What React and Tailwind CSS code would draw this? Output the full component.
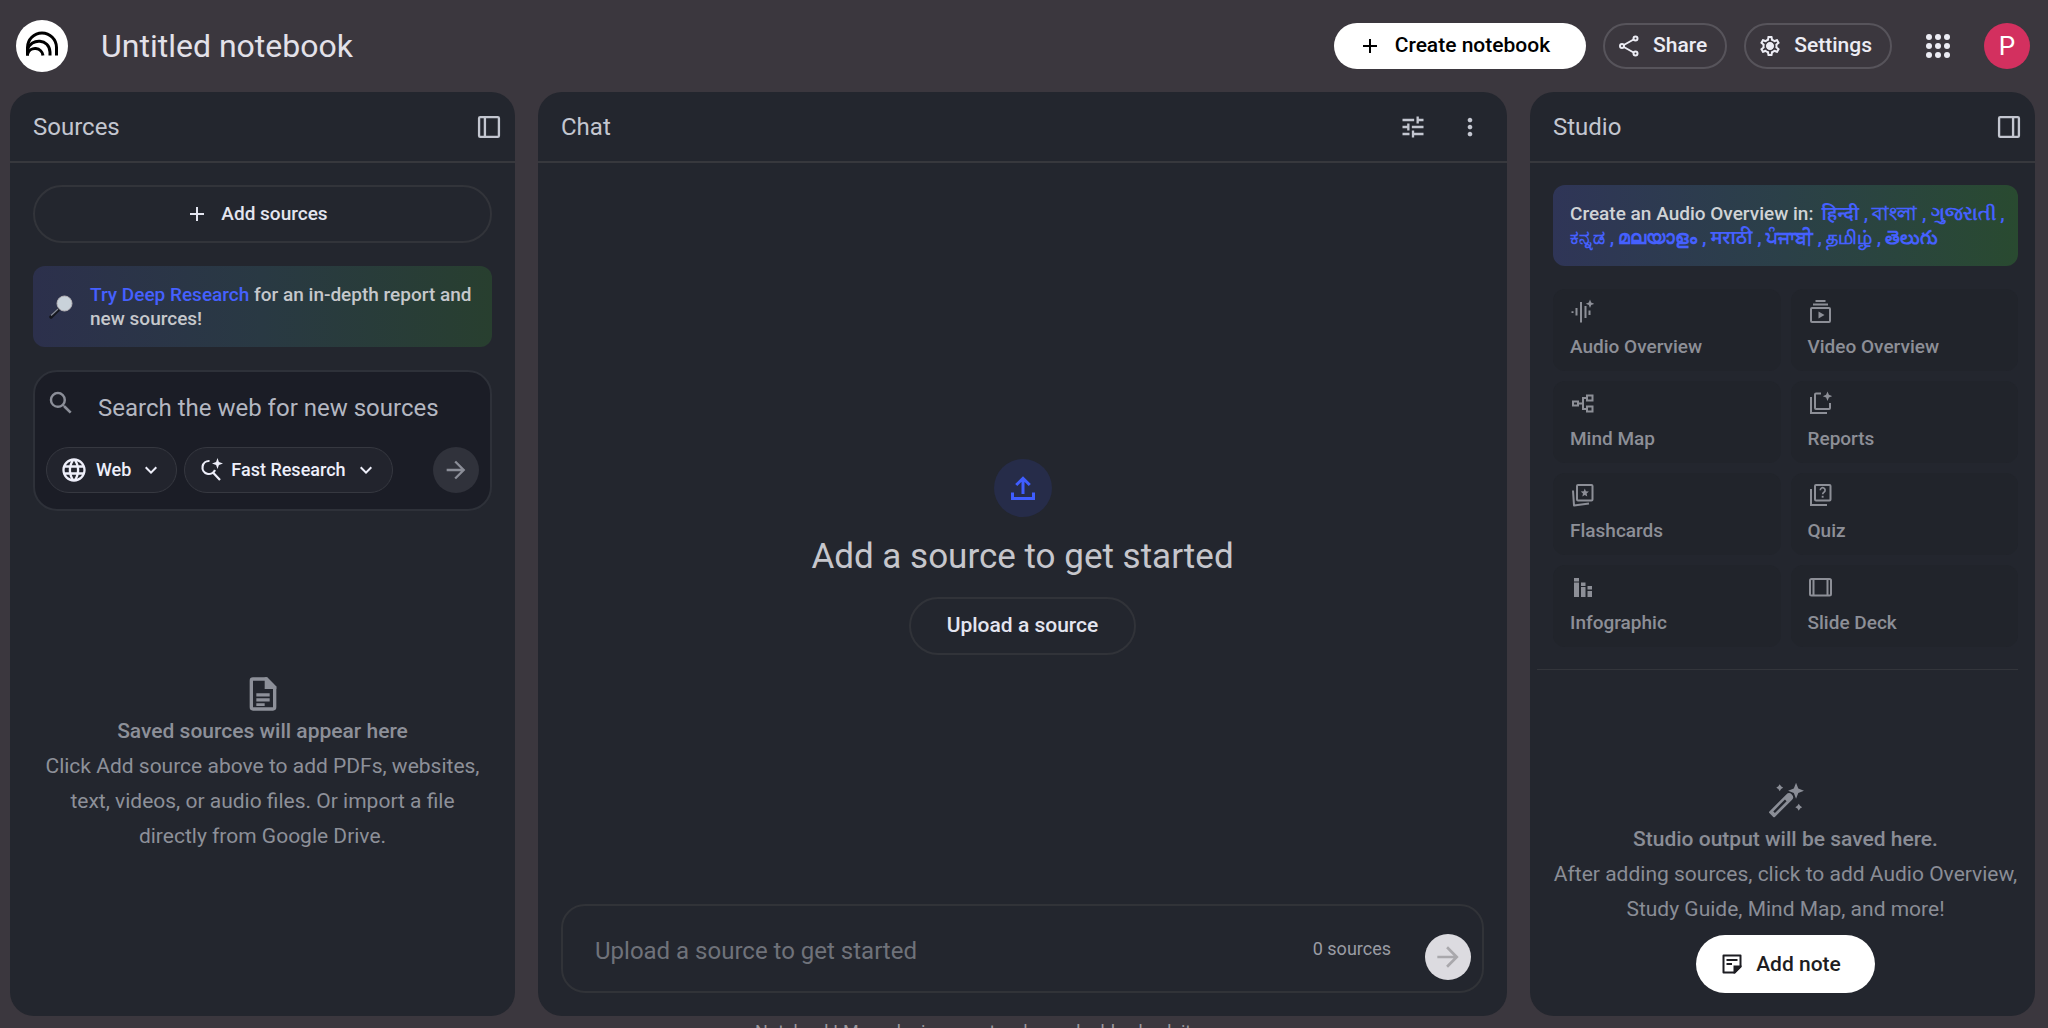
import React from "react";
import {
  MdAdd, MdOutlineSettings, MdTune, MdMoreVert, MdLanguage, MdExpandMore,
  MdArrowForward, MdSearch,
} from "react-icons/md";

const stroke = { fill: "none", stroke: "currentColor", strokeWidth: 2 };

function Icon({ children, className }) {
  return (
    <svg viewBox="0 0 24 24" fill="currentColor" aria-hidden="true" className={className}>
      {children}
    </svg>
  );
}

const Logo = () => (
  <svg viewBox="0 0 52 52" className="size-13 shrink-0" role="img" aria-label="Logo">
    <circle cx="26" cy="26" r="26" fill="#fff" />
    <g fill="none" stroke="#000" strokeWidth="3">
      <path d="M11.5 35.5V27.500a14.500 14.500 0 0 1 29 0V35.500" />
      <path d="M11.500 29.500C15 17.500 33.500 18.500 34 32V35.500" />
      <path d="M11.500 35.500v-1.500a8 8 0 0 1 15.500 1.500" />
    </g>
  </svg>
);

const PanelIcon = ({ right }) => (
  <Icon className="size-7">
    <rect x="3.500" y="3.500" width="17" height="17" rx="1" {...stroke} />
    <path d={right ? "M15.500 3v18" : "M8.500 3v18"} {...stroke} />
  </Icon>
);

const ShareIcon = () => (
  <Icon className="size-6">
    <g {...stroke}>
      <circle cx="18.500" cy="4.500" r="2" />
      <circle cx="5" cy="12" r="2" />
      <circle cx="18.500" cy="19.500" r="2" />
      <path d="M6.800 11l9.800-5.500M6.800 13l9.800 5.500" />
    </g>
  </Icon>
);

const SettingsIcon = () => (
  <Icon className="size-6">
    <MdOutlineSettings size={24} />
    <circle cx="12" cy="12" r="3.500" />
  </Icon>
);

const AppsIcon = () => (
  <Icon className="size-6">
    {[3, 12, 21].map((y) => [3, 12, 21].map((x) => <circle key={`${x}-${y}`} cx={x} cy={y} r="3" />))}
  </Icon>
);

const SearchSpark = () => (
  <Icon className="size-6">
    <path d="M10.500 3a6.500 6.500 0 1 0 5.500 9M13.500 14l7.500 8" {...stroke} strokeWidth="2.200" />
    <path d="M18.500 0l1.400 4L24 5.500l-4.100 1.400L18.500 11l-1.400-4.100L13 5.500 17.100 4z" />
  </Icon>
);

const DocIcon = () => (
  <Icon className="size-10">
    <path d="M14 3H6a1 1 0 0 0-1 1v16a1 1 0 0 0 1 1h12a1 1 0 0 0 1-1V8z" {...stroke} />
    <path d="M13 2h1.500L20 7.500V9h-7z" />
    <path d="M8 11.500h8v2H8zM8 14.500h8v2H8zM8 17.500h5v1.700H8z" />
  </Icon>
);

const UploadIcon = () => (
  <Icon className="size-9">
    <path d="M5 15v4h14v-4" {...stroke} />
    <path d="M12 16V6M7.500 10L12 5.500 16.500 10" {...stroke} />
  </Icon>
);

const NoteIcon = () => (
  <Icon className="size-6">
    <path d="M3.500 3.500h17v11l-6 6h-11z" {...stroke} strokeLinejoin="round" />
    <path d="M13.500 13.500h8v1.500L15 21.500h-1.500z" />
    <path d="M6.500 7h11v2h-11zM6.500 11h5.500v2H6.500z" />
  </Icon>
);

const WandIcon = () => (
  <Icon className="size-9">
    <path
      fillRule="evenodd"
      d="M.9 19.600L12.200 8.300a2.600 2.600 0 0 1 3.700 3.700L4.600 23.300a.8.8 0 0 1-1.100 0L.9 20.700a.8.8 0 0 1 0-1.100zM3.500 19.600l1.100 1.100 7.800-7.900-1.100-1.100z"
    />
    <path d="M18.700.5l1.500 3.800L24 5.800l-3.800 1.500-1.500 3.800-1.500-3.800-3.800-1.500 3.800-1.500z" />
    <path d="M7.800 1.500l.9 1.400 1.400.9-1.400.9-.9 1.400-.9-1.400-1.400-.9 1.400-.9zM20.500 14.500l.9 1.400 1.400.9-1.400.9-.9 1.400-.9-1.400-1.400-.9 1.400-.9z" />
  </Icon>
);

const AudioIcon = () => (
  <Icon className="size-6">
    <path d="M2.500 12.200v1.800M6.500 9v7.500M11 3v20.500M15.500 7v12M19.500 11.500v4.500" {...stroke} />
    <path d="M20 .5l1.200 3.100 3 1.200-3 1.200-1.200 3.100-1.200-3.100-3-1.200 3-1.200z" />
  </Icon>
);
const VideoIcon = () => (
  <Icon className="size-6">
    <rect x="3" y="9" width="19" height="14" rx="1" {...stroke} />
    <path d="M5 4.500h15v2H5zM7.500 1h10v2h-10z" />
    <path d="M10.500 12.500v7l6-3.500z" />
  </Icon>
);
const MindIcon = () => (
  <Icon className="size-6">
    <g {...stroke}>
      <rect x="3" y="10.500" width="5" height="4" />
      <rect x="17" y="4.500" width="5.500" height="5" />
      <rect x="17" y="15.500" width="5.500" height="5" />
      <path d="M8 12.500h5M17 7h-4v11h4" />
    </g>
  </Icon>
);
const ReportIcon = () => (
  <Icon className="size-6">
    <path d="M13 2.500H8a1 1 0 0 0-1 1V17a1 1 0 0 0 1 1h13a1 1 0 0 0 1-1v-5M3 6v16h16" {...stroke} />
    <path d="M19.500.5l1.400 3.300 3.300 1.400-3.300 1.400-1.400 3.300-1.400-3.300-3.300-1.400 3.300-1.400z" />
  </Icon>
);
const CardsIcon = () => (
  <Icon className="size-6">
    <rect x="7" y="2" width="15.500" height="15.500" rx="1" {...stroke} />
    <path d="M3 7.500l1 15 15-2" {...stroke} strokeLinejoin="round" />
    <path d="M14.800 5.500l1.100 2.800 3 .3-2.300 2 .7 3-2.500-1.600-2.500 1.600.7-3-2.300-2 3-.3z" />
  </Icon>
);
const QuizIcon = () => (
  <Icon className="size-6">
    <rect x="7" y="2" width="15.500" height="15.500" rx="1" {...stroke} />
    <path d="M3 6v16h16" {...stroke} />
    <path d="M12.300 7.200a2.400 2.400 0 1 1 3.900 1.800c-.9.700-1.500 1.100-1.500 2.300" {...stroke} strokeWidth="1.700" />
    <path d="M13.700 12.800h1.900v1.900h-1.900z" />
  </Icon>
);
const InfoIcon = () => (
  <Icon className="size-6">
    <path d="M4 3h5v3.500H4zM4 7.500h5V22H4zM11 7.500h4.500V11H11zM11 12h4.500v10H11zM17.500 11H22v3.500h-4.500zM17.500 16H22v6h-4.500z" />
  </Icon>
);
const SlideIcon = () => (
  <Icon className="size-6">
    <rect x="2" y="4" width="21" height="16.500" rx="1.500" {...stroke} />
    <path d="M5.500 4v16M19.500 4v16" {...stroke} />
  </Icon>
);

const Magnifier = () => (
  <svg viewBox="0 0 24 24" className="size-6 shrink-0" aria-hidden="true">
    <path d="M2 22L9 15" stroke="#15171e" strokeWidth="3.500" strokeLinecap="round" />
    <path d="M2 20.500L9 14" stroke="#868b99" strokeWidth="1.300" />
    <circle cx="15.500" cy="8.500" r="7.500" fill="#c9d2da" stroke="#b5b2b6" strokeWidth="1" />
  </svg>
);

const tools = [
  ["Audio Overview", AudioIcon], ["Video Overview", VideoIcon],
  ["Mind Map", MindIcon], ["Reports", ReportIcon],
  ["Flashcards", CardsIcon], ["Quiz", QuizIcon],
  ["Infographic", InfoIcon], ["Slide Deck", SlideIcon],
];

const languages = [
  ["hi", "हिन्दी"], ["bn", "বাংলা"], ["gu", "ગુજરાતી"], ["kn", "ಕನ್ನಡ"], ["ml", "മലയാളം"],
  ["mr", "मराठी"], ["pa", "ਪੰਜਾਬੀ"], ["ta", "தமிழ்"], ["te", "తెలుగు"],
];

function Panel({ title, actions, wide, children }) {
  return (
    <section className="flex min-h-0 min-w-0 flex-col overflow-hidden rounded-3xl bg-[#23262e]">
      <header className={`flex h-[71px] shrink-0 items-center justify-between border-b-2 border-[#37383d] pl-[23px] text-[#c3c6d0] ${wide ? "pr-[23px]" : "pr-3"}`}>
        <h2 className="text-2xl">{title}</h2>
        <div className="flex gap-[29px]">{actions}</div>
      </header>
      {children}
    </section>
  );
}

export default function App() {
  return (
    <div className="flex h-screen flex-col overflow-hidden bg-[#3b373e] font-[Roboto,'Noto_Sans',sans-serif]">
      <header className="flex h-[92px] shrink-0 items-center pr-[18px] pl-4">
        <Logo />
        <h1 className="ml-[33px] text-[32px] text-[#e3e1e9]">Untitled notebook</h1>
        <div className="ml-auto flex items-center text-[21px] font-medium text-[#ececf4]">
          <button className="flex h-[46px] items-center gap-[13px] rounded-full bg-white pr-9 pl-6 text-black">
            <MdAdd className="size-6" />Create notebook
          </button>
          <button className="ml-[17px] flex h-[46px] items-center gap-3 rounded-full border-2 border-[#57545b] pr-[18px] pl-3">
            <ShareIcon />Share
          </button>
          <button className="ml-[17px] flex h-[46px] items-center gap-3 rounded-full border-2 border-[#57545b] pr-[18px] pl-3">
            <SettingsIcon />Settings
          </button>
          <button aria-label="Apps" className="ml-[34px]"><AppsIcon /></button>
          <button aria-label="Account" className="ml-[34px] size-[46px] rounded-full bg-[#d3305f] text-[26px] font-normal text-white">P</button>
        </div>
      </header>

      <main className="grid min-h-0 flex-1 grid-cols-[505fr_969fr_505fr] gap-[23px] pr-[13px] pl-[10px]">
        <Panel title="Sources" actions={<button aria-label="Collapse sources"><PanelIcon /></button>}>
          <div className="flex min-h-0 flex-1 flex-col px-[23px] pt-[22px]">
            <button className="flex h-[58px] shrink-0 items-center justify-center gap-3 rounded-full border-2 border-[#32343a] pr-3 text-[19px] font-medium text-[#e3e5f0]">
              <MdAdd className="size-6" />Add sources
            </button>
            <div className="mt-[23px] flex h-[81px] shrink-0 items-center gap-[17px] rounded-xl bg-linear-to-r from-[#2c304c] via-[#293943] to-[#283f2f] pr-3 pl-4 text-[19px]/6 font-medium text-[#c6c8cc]">
              <Magnifier />
              <p><a href="#research" className="text-[#4560ff]">Try Deep Research</a> for an in-depth report and new sources!</p>
            </div>
            <form className="mt-[23px] flex h-[141px] shrink-0 flex-col justify-between rounded-3xl border-2 border-[#2e3139] bg-[#1b1d26] px-[11px] pt-4 pb-4">
              <div className="flex gap-[22px]">
                <MdSearch className="size-[30px] text-[#8b8e98]" />
                <input aria-label="Search the web" placeholder="Search the web for new sources" className="min-w-0 flex-1 pt-1 text-2xl/8 outline-none placeholder:text-[#b4b7c1]" />
              </div>
              <div className="flex items-center gap-[7px] text-lg font-medium text-[#eeeffa]">
                <button type="button" className="flex h-[46px] items-center gap-2 rounded-full border border-[#363840] bg-[#22242d] px-[13px]">
                  <MdLanguage className="size-7" />Web<MdExpandMore className="size-6" />
                </button>
                <button type="button" className="flex h-[46px] items-center gap-2 rounded-full border border-[#363840] bg-[#22242d] px-3.5">
                  <SearchSpark />Fast Research<MdExpandMore className="size-6" />
                </button>
                <button aria-label="Search" className="ml-auto flex size-[46px] items-center justify-center rounded-full bg-[#30323b] text-[#8b8e98]">
                  <MdArrowForward className="size-7" />
                </button>
              </div>
            </form>
            <div className="mt-[163px] flex flex-col items-center px-2 text-center text-[21px]/[35px] text-[#8d9099]">
              <DocIcon />
              <p className="font-medium">Saved sources will appear here</p>
              <p>Click Add source above to add PDFs, websites, text, videos, or audio files. Or import a file directly from Google Drive.</p>
            </div>
          </div>
        </Panel>

        <Panel
          title="Chat"
          wide
          actions={<><button aria-label="Configure chat"><MdTune className="size-7" /></button><button aria-label="More"><MdMoreVert className="size-7" /></button></>}
        >
          <div className="flex min-h-0 flex-1 flex-col items-center justify-center pt-[46px]">
            <div className="flex size-[58px] items-center justify-center rounded-full bg-[#262c49] text-[#3f5dff]"><UploadIcon /></div>
            <h2 className="mt-4 text-[35px]/12 text-[#c6c6cc]">Add a source to get started</h2>
            <button className="mt-4 h-[58px] rounded-full border-2 border-[#313339] px-9 text-[21px] font-medium text-[#e3e5f0]">Upload a source</button>
          </div>
          <form className="mx-[23px] mb-[23px] flex h-[89px] shrink-0 items-center rounded-3xl border-2 border-[#313338] pr-[11px] pl-8">
            <input aria-label="Message" placeholder="Upload a source to get started" className="min-w-0 flex-1 pt-1 text-2xl outline-none placeholder:text-[#6f727a]" />
            <span className="text-lg text-[#9a9ca4]">0 sources</span>
            <button aria-label="Send" className="mt-4 ml-[34px] flex size-[46px] items-center justify-center rounded-full bg-[#dcdbe0] text-[#a9a8ac]">
              <MdArrowForward className="size-8" />
            </button>
          </form>
        </Panel>

        <Panel title="Studio" actions={<button aria-label="Collapse studio"><PanelIcon right /></button>}>
          <div className="flex min-h-0 flex-1 flex-col pt-[22px] pr-[17px] pl-[23px] pb-[23px]">
            <p className="flex h-[81px] shrink-0 flex-wrap content-center gap-x-1 rounded-xl bg-linear-to-r from-[#2f3557] via-[#2b4048] to-[#294a30] pr-3 pl-[17px] text-[19px]/6 font-semibold text-[#4560ff]">
              <span className="mr-1 font-medium text-[#d0d3d6]">Create an Audio Overview in:</span>
              {languages.map(([code, name], i) => (
                <span key={code}>
                  <a href={`#${code}`} lang={code}>{name}</a>{i < languages.length - 1 && " ,"}
                </span>
              ))}
            </p>
            <div className="mt-[23px] grid shrink-0 grid-cols-2 gap-2.5">
              {tools.map(([name, Glyph]) => (
                <button key={name} className="flex h-[82px] flex-col items-start justify-between rounded-xl bg-[#21242b] px-[17px] pt-2.5 pb-3 text-[19px]/6 font-medium text-[#8d8f97]">
                  <Glyph />{name}
                </button>
              ))}
            </div>
            <hr className="mt-[22px] -ml-4 border-[#33353b]" />
            <div className="mt-auto flex flex-col items-center text-center text-[21px]/[35px] text-[#8a8d96]">
              <WandIcon />
              <p className="mt-1 font-medium">Studio output will be saved here.</p>
              <p className="-mx-2">After adding sources, click to add Audio Overview, Study Guide, Mind Map, and more!</p>
              <button className="mt-2 flex h-[58px] items-center gap-3 rounded-full bg-white pr-[34px] pl-6 font-medium text-[#1d1d22]">
                <NoteIcon />Add note
              </button>
            </div>
          </div>
        </Panel>
      </main>
      <footer className="h-3 shrink-0 text-center text-lg/8 text-[#9a989e]">NotebookLM can be inaccurate; please double check its responses.</footer>
    </div>
  );
}
